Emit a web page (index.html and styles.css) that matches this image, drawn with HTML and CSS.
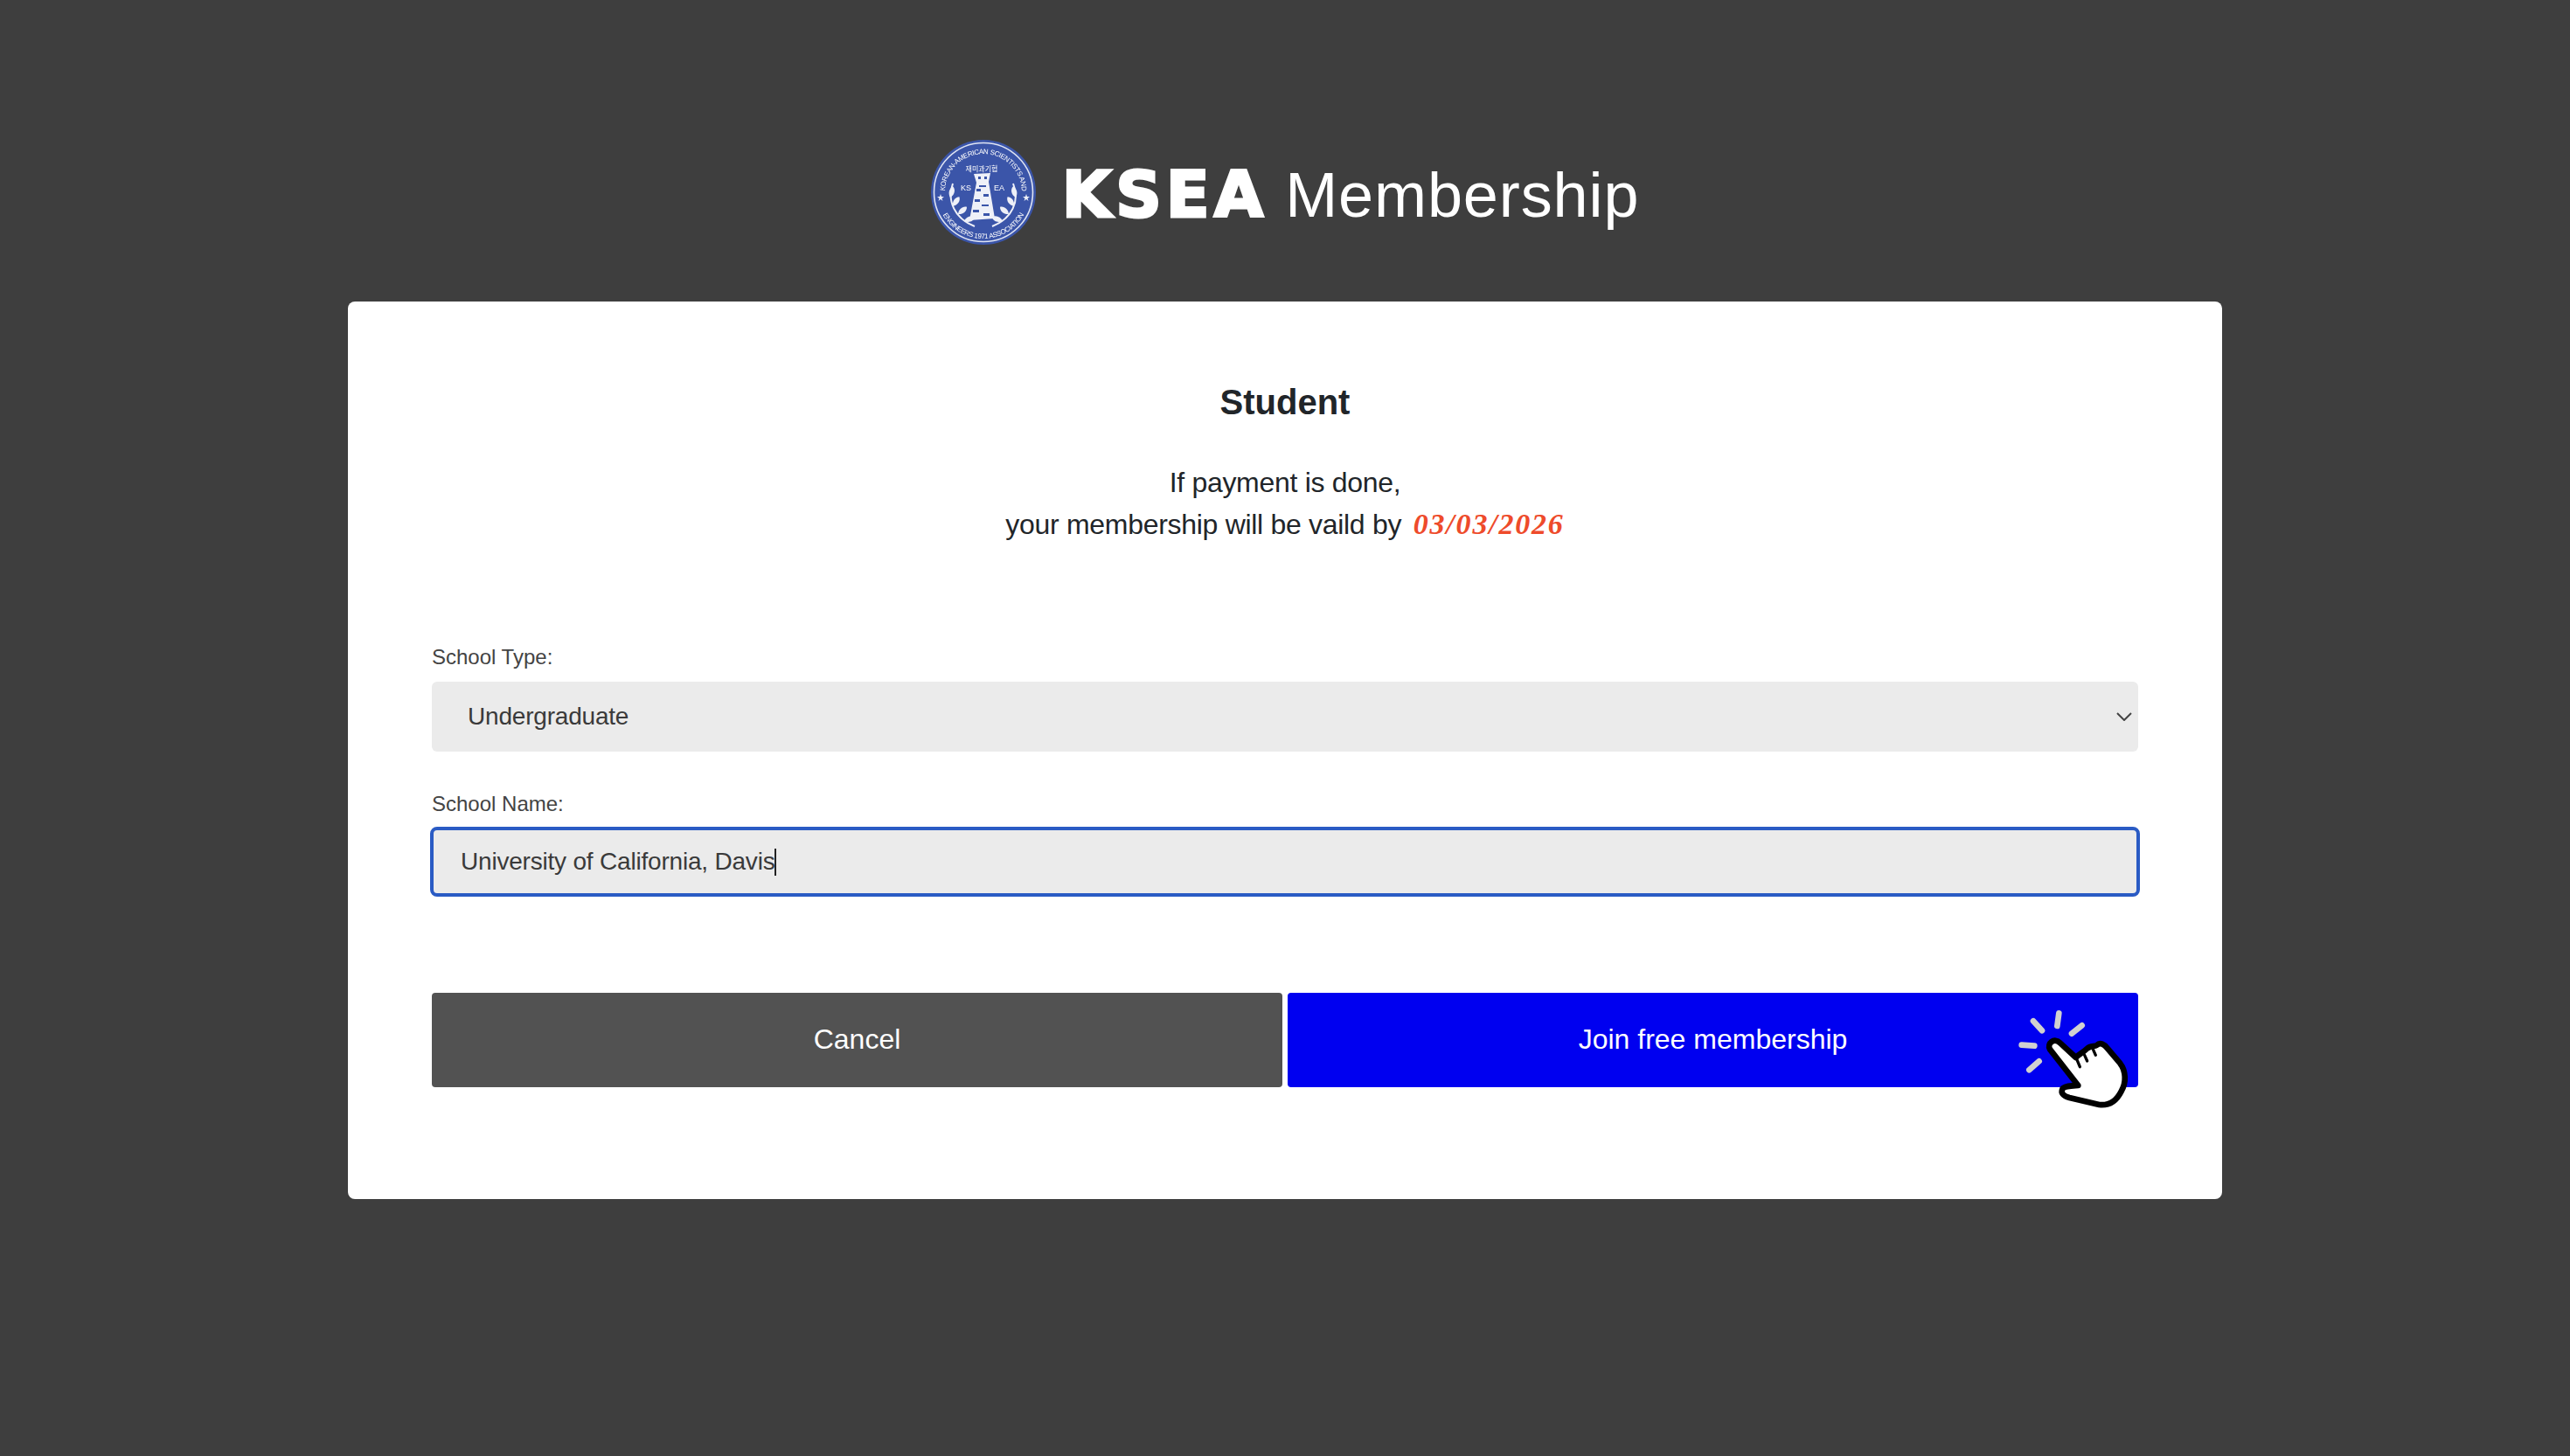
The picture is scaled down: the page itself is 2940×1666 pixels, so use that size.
FILE: index.html
```html
<!DOCTYPE html>
<html lang="en">
<head>
    <meta charset="UTF-8">
    <title>KSEA Membership</title>
    <link rel="stylesheet" href="styles.css">
</head>
<body>

<div class="header">
    <svg class="seal" viewBox="0 0 120 120" aria-hidden="true">
        <defs>
            <path id="arcTop" d="M 20.1 78.6 A 44 44 0 1 1 99.9 78.6"/>
            <path id="arcBottom" d="M 7 60 A 53 53 0 0 0 113 60"/>
            <path id="leaf" d="M0 0 C4 -4 10 -4 13 0 C10 4 4 4 0 0 Z"/>
        </defs>
        <circle class="seal-base" cx="60" cy="60" r="60"/>
        <circle class="seal-ring" cx="60" cy="60" r="56.5"/>
        <text class="seal-text"><textPath href="#arcTop" startOffset="50%">KOREAN-AMERICAN SCIENTISTS AND</textPath></text>
        <text class="seal-text"><textPath href="#arcBottom" startOffset="50%">ENGINEERS 1971 ASSOCIATION</textPath></text>
        <text class="seal-korean" x="58" y="36">재미과기협</text>
        <text class="seal-mark" x="40" y="58">KS</text>
        <text class="seal-mark" x="78" y="58">EA</text>
        <polygon class="seal-white" points="11,62 12,65 15,65 12.5,67 13.5,70 11,68 8.5,70 9.5,67 7,65 10,65"/>
        <polygon class="seal-white" points="109,62 110,65 113,65 110.5,67 111.5,70 109,68 106.5,70 107.5,67 105,65 108,65"/>
        <path class="seal-white" d="M49 39 L68 38 L66 48 L73 90 L44 92 L52 49 Z"/>
        <path class="seal-window" d="M54 42h3v3h-3zM61 42h3v3h-3zM52 56h5v3h-5zM60 62h6v3h-6zM50 68h6v3h-6zM58 74h8v2h-8zM48 80h7v3h-7zM60 84h7v3h-7zM55 52h8v2h-8z"/>
        <path class="wreath" d="M25 50 C18 70 27 90 50 99"/>
        <path class="wreath" d="M94 50 C102 70 93 90 70 99"/>
        <g class="seal-white">
            <use href="#leaf" transform="translate(22 66) rotate(-75)"/>
            <use href="#leaf" transform="translate(25 76) rotate(-55)"/>
            <use href="#leaf" transform="translate(31 85) rotate(-40)"/>
            <use href="#leaf" transform="translate(38 93) rotate(-20)"/>
            <use href="#leaf" transform="translate(97 66) rotate(-105)"/>
            <use href="#leaf" transform="translate(95 76) rotate(-125)"/>
            <use href="#leaf" transform="translate(89 85) rotate(-140)"/>
            <use href="#leaf" transform="translate(82 93) rotate(-160)"/>
        </g>
    </svg>
    <h1 class="title"><span class="title-bold">KSEA</span> <span class="title-thin">Membership</span></h1>
</div>

<div class="card">
    <h2 class="plan">Student</h2>
    <p class="notice">
        If payment is done,<br>
        your membership will be vaild by <span class="date">03/03/2026</span>
    </p>

    <div class="label label-first">School Type:</div>
    <div class="select">
        <span>Undergraduate</span>
        <svg class="chevron" viewBox="0 0 18 10" aria-hidden="true"><path d="M1 1 L9 9 L17 1"/></svg>
    </div>

    <div class="label">School Name:</div>
    <div class="input">University of California, Davis<span class="caret"></span></div>

    <div class="buttons">
        <div class="btn btn-cancel">Cancel</div>
        <div class="btn btn-join">
            Join free membership
            <svg class="pointer" viewBox="0 0 540 450" aria-hidden="true">
                <path class="ray" d="M138 115 L168 148 M226 88 L220 132 M305 130 L270 158 M98 197 L142 200 M158 253 L124 283"/>
                <path class="hand" d="M195 212 C184 192 210 170 230 190 L284 240 C296 228 310 222 322 210 C334 198 350 204 356 198 C368 186 382 196 392 208 L436 260 C456 286 458 326 440 356 C424 388 398 406 364 402 L262 378 C240 372 232 362 238 348 C244 338 262 338 292 336 Z"/>
                <path class="knuckle" d="M298 272 L288 248 M323 252 L314 232 M352 232 L344 214"/>
            </svg>
        </div>
    </div>
</div>

</body>
</html>
```

FILE: styles.css
```css
*{
    margin: 0;
    padding: 0;
    box-sizing: border-box;
}
body{
    min-height: 1666px;
    background: #3e3e3e;
    font-family: "Liberation Sans", Arial, sans-serif;
    color: #212529;
}

.header{
    display: flex;
    justify-content: center;
    align-items: center;
    gap: 30px;
    padding-top: 160px;
}
.seal{
    width: 120px;
    height: 120px;
    filter: blur(0.4px);
}
.seal-base{
    fill: #3b55a9;
}
.seal-ring{
    fill: none;
    stroke: #dfe4f3;
    stroke-width: 1.6;
}
.seal-text{
    fill: #fff;
    font-family: "Liberation Sans", sans-serif;
    font-size: 8px;
    letter-spacing: -0.4px;
    text-anchor: middle;
}
.seal-korean{
    fill: #fff;
    font-family: "Noto Sans CJK KR", sans-serif;
    font-size: 8px;
    text-anchor: middle;
}
.seal-mark{
    fill: #fff;
    font-family: "Liberation Sans", sans-serif;
    font-size: 9px;
    text-anchor: middle;
}
.seal-white{
    fill: #eef0f8;
}
.seal-window{
    fill: #3b55a9;
}
.wreath{
    fill: none;
    stroke: #eef0f8;
    stroke-width: 2;
}
.title{
    display: flex;
    align-items: baseline;
    gap: 20px;
    padding-top: 4px;
    color: #fff;
    font-weight: normal;
}
.title-bold{
    font-family: "DejaVu Sans", sans-serif;
    font-size: 73px;
    font-weight: bold;
    -webkit-text-stroke: 3px #fff;
    letter-spacing: 5px;
}
.title-thin{
    font-size: 72px;
    letter-spacing: 0.9px;
}

.card{
    width: 2144px;
    height: 1027px;
    margin: 65px auto 0;
    padding: 91px 96px 128px;
    background: #fff;
    border-radius: 8px;
}
.plan{
    font-size: 40px;
    line-height: 48px;
    text-align: center;
}
.notice{
    margin-top: 44px;
    font-size: 32px;
    line-height: 48px;
    letter-spacing: -0.3px;
    text-align: center;
}
.date{
    margin-left: 5px;
    color: #ee4b2b;
    font-family: "Liberation Serif", serif;
    font-size: 34px;
    font-style: italic;
    font-weight: bold;
    letter-spacing: 1.8px;
}

.label{
    margin-top: 46px;
    margin-bottom: 12px;
    font-size: 24px;
    line-height: 28px;
    color: #444;
}
.label-first{
    margin-top: 114px;
    margin-bottom: 14px;
}
.select{
    display: flex;
    justify-content: space-between;
    align-items: center;
    height: 80px;
    padding: 0 7px 0 41px;
    background: #ebebeb;
    border-radius: 6px;
    font-size: 28px;
    letter-spacing: -0.2px;
    color: #3a3a3a;
}
.chevron{
    width: 18px;
    height: 10px;
    fill: none;
    stroke: #444;
    stroke-width: 2;
}
.input{
    display: flex;
    align-items: center;
    height: 80px;
    margin: 0 -2px;
    padding-left: 31px;
    background: #ebebeb;
    border: 4px solid #2a5bc4;
    border-radius: 8px;
    font-size: 28px;
    letter-spacing: -0.2px;
    color: #3a3a3a;
}
.caret{
    width: 2px;
    height: 31px;
    background: #222;
}

.buttons{
    display: flex;
    gap: 6px;
    margin-top: 110px;
}
.btn{
    flex: 1;
    height: 108px;
    line-height: 106px;
    text-align: center;
    border-radius: 4px;
    color: #fff;
    font-size: 32px;
}
.btn-cancel{
    background: #525252;
}
.btn-join{
    position: relative;
    background: #0000f0;
}
.pointer{
    position: absolute;
    top: -6px;
    right: -14px;
    width: 180px;
    height: 150px;
}
.ray{
    fill: none;
    stroke: #d0d0d0;
    stroke-width: 20;
    stroke-linecap: round;
}
.hand{
    fill: #fff;
    stroke: #000;
    stroke-width: 20;
    stroke-linejoin: round;
}
.knuckle{
    fill: none;
    stroke: #000;
    stroke-width: 10;
    stroke-linecap: round;
}
```
